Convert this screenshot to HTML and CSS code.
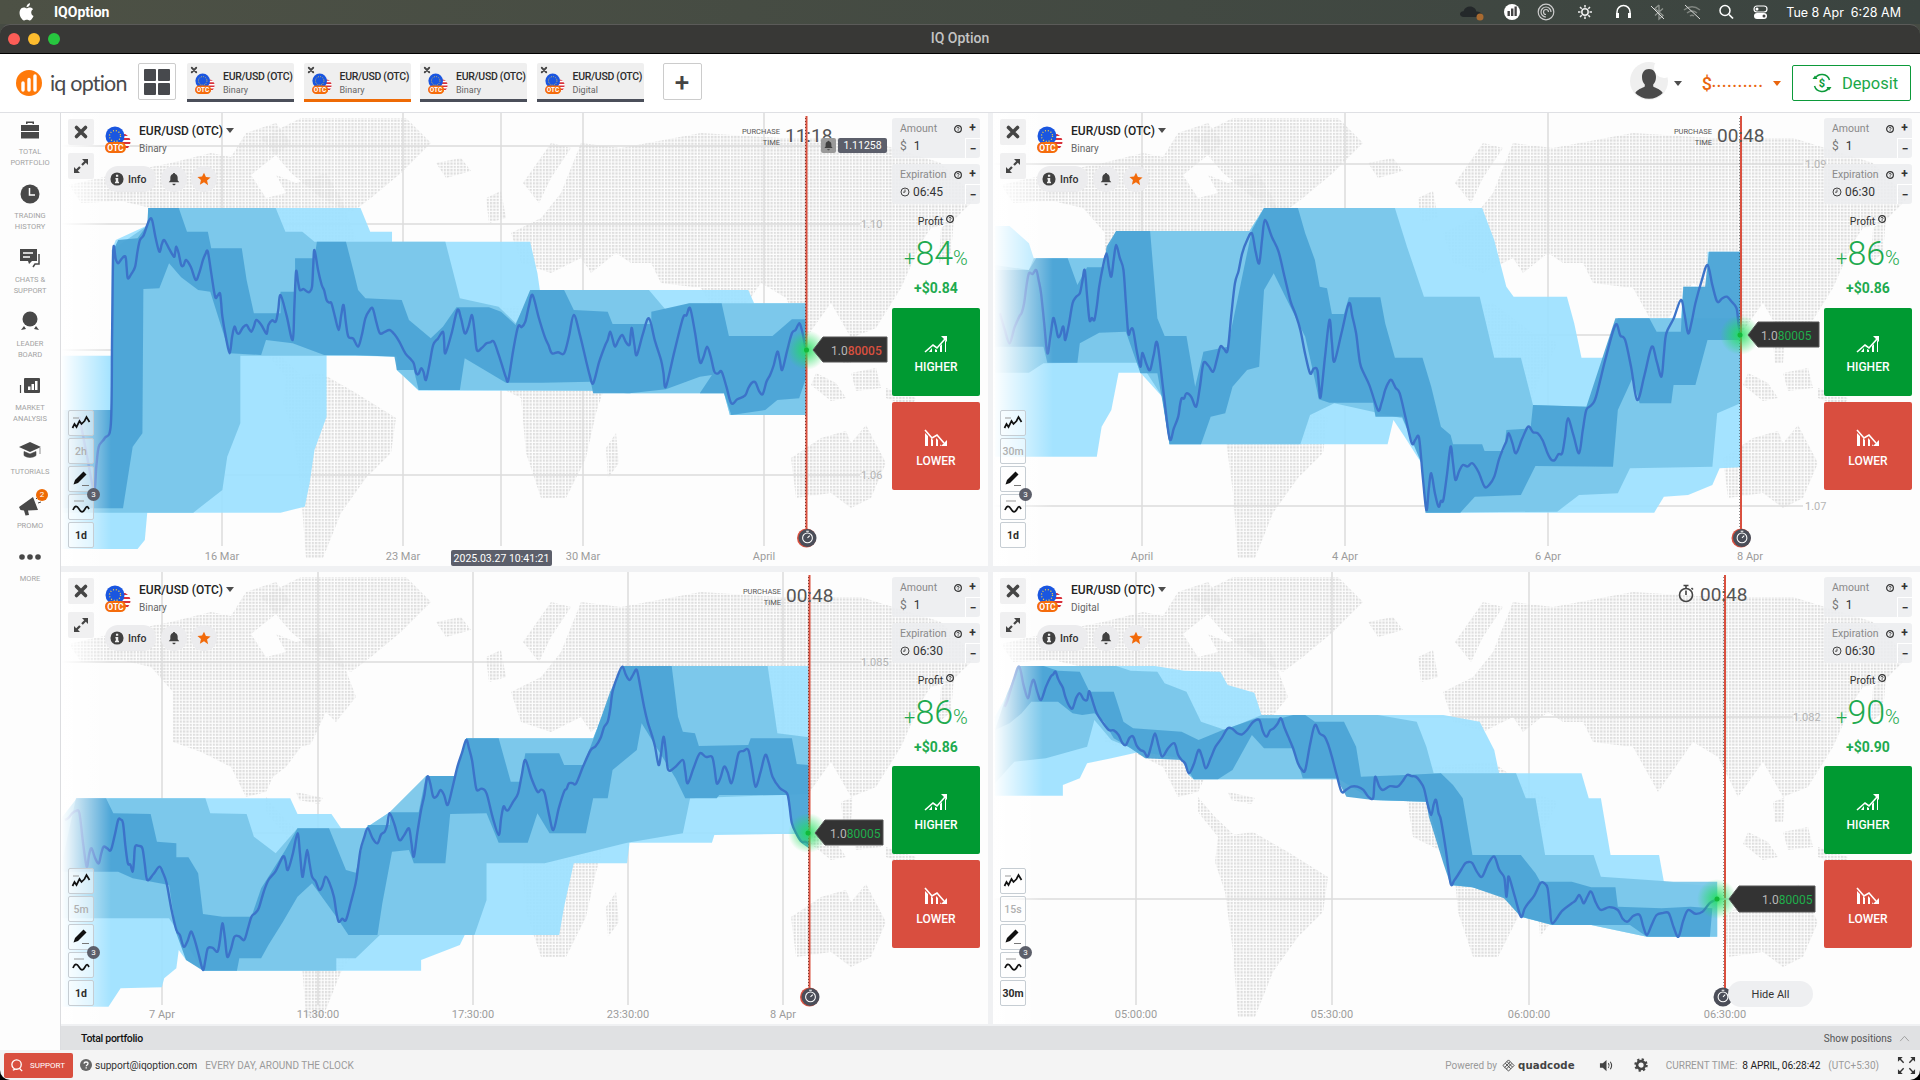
FILE: index.html
```html
<!DOCTYPE html>
<html lang="en">

<head>
    <meta charset="UTF-8">
    <meta name="viewport" content="width=device-width, initial-scale=1.0">
    <title>IQ Option</title>
    <link rel="stylesheet" href="styles.css">
</head>

<body>
    <!-- shared icons, map and gradients -->
    <svg class="sprite" width="0" height="0">
        <defs>
            <pattern id="dots" width="3.3" height="3.3" patternUnits="userSpaceOnUse">
                <rect width="2.2" height="2.2" fill="#dedede"/>
            </pattern>
            <linearGradient id="fade">
                <stop offset="0" stop-color="#fff"/>
                <stop offset="1" stop-color="#fff" stop-opacity="0"/>
            </linearGradient>
            <radialGradient id="glow">
                <stop offset="0" stop-color="#1fe05a" stop-opacity=".9"/>
                <stop offset="1" stop-color="#1fe05a" stop-opacity="0"/>
            </radialGradient>
            <clipPath id="eu"><circle cx="10" cy="10" r="9.5"/></clipPath>
            <clipPath id="us"><circle cx="17" cy="16" r="8.5"/></clipPath>
        </defs>
        <symbol id="map" viewBox="0 0 927 453">
            <g fill="url(#dots)">
                <polygon points="8,72 60,60 110,50 150,40 170,44 185,20 215,10 230,30 205,50 190,62 205,85 225,80 215,62 235,70 265,60 280,85 295,125 275,150 265,140 250,172 240,175 225,195 212,205 205,220 185,225 170,195 140,180 112,170 112,120 90,95 60,88 20,90"/>
                <polygon points="200,25 240,5 345,5 370,30 340,60 310,85 290,100 260,85 230,60"/>
                <polygon points="225,265 260,260 295,280 335,305 330,340 305,365 280,400 262,445 245,445 240,380 232,320 222,290"/>
                <polygon points="205,225 222,245 240,262 225,265 205,240"/>
                <polygon points="235,220 262,226 258,232 238,228"/>
                <polygon points="375,50 400,45 410,58 385,65"/>
                <polygon points="425,85 440,78 445,105 428,110"/>
                <polygon points="462,70 490,30 510,35 490,65 478,90"/>
                <polygon points="500,80 520,30 560,35 640,20 720,25 800,25 880,50 915,85 890,110 870,115 860,130 840,175 815,215 790,225 770,190 745,225 725,185 700,170 665,220 640,175 600,170 590,150 570,150 555,140 530,160 520,145 490,160 460,150 450,120 480,105"/>
                <polygon points="880,115 893,105 890,140 878,150"/>
                <polygon points="412,215 430,195 470,192 500,190 540,220 565,230 545,270 535,300 525,345 505,385 480,385 465,340 460,285 420,265"/>
                <polygon points="545,335 555,320 558,350 547,365"/>
                <polygon points="730,345 760,325 785,318 790,330 805,312 825,350 810,385 790,395 770,380 735,385"/>
                <polygon points="755,260 775,270 785,285 770,288 750,272"/>
                <polygon points="790,260 815,255 820,275 795,278"/>
                <polygon points="825,275 855,285 850,295 825,285"/>
                <polygon points="780,230 792,225 790,250 782,250"/>
            </g>
        </symbol>
        <symbol id="flag" viewBox="0 0 26 27">
            <g clip-path="url(#us)">
                <rect x="8" y="7" width="18" height="18" fill="#fff"/>
                <path d="M8 9h18M8 13h18M8 17h18M8 21h18M8 25h18" stroke="#d8323c" stroke-width="2"/>
                <rect x="8" y="7" width="9" height="8" fill="#8fb6e8"/>
            </g>
            <circle cx="10" cy="10" r="9.5" fill="#1a56e0"/>
            <circle cx="10" cy="10" r="5.5" fill="none" stroke="#ffd43a" stroke-width="1.3" stroke-dasharray="1 1.9"/>
            <rect y="16" width="21" height="11" rx="5.5" fill="#f56c0c"/>
        </symbol>
        <symbol id="ico-close" viewBox="0 0 16 16">
            <path d="M3.5 3.5l9 9M12.5 3.5l-9 9" stroke="#454545" stroke-width="3.6" stroke-linecap="round"/>
        </symbol>
        <symbol id="ico-expand" viewBox="0 0 16 16">
            <path d="M9 1h6v6l-2.2-2.2-3 3-1.600-1.600 3-3zM7 15H1V9l2.200 2.200 3-3 1.600 1.600-3 3z" fill="#454545"/>
        </symbol>
        <symbol id="ico-line" viewBox="0 0 20 20">
            <path d="M2 5h6" stroke="#999" stroke-width="1"/>
            <path d="M1.500 15l2-4 2 3 3-6 2 3 3-3 2-4 3 5" fill="none" stroke="#111" stroke-width="1.700"/>
        </symbol>
        <symbol id="ico-pen" viewBox="0 0 20 20">
            <path d="M12.500 2.500l3 3-8.500 8.500-4.500 1.500 1.500-4.500z" fill="#111"/>
            <path d="M11 16.500h7" stroke="#777" stroke-width="1"/>
        </symbol>
        <symbol id="ico-wave" viewBox="0 0 20 20">
            <path d="M3 4h10" stroke="#999" stroke-width="1"/>
            <path d="M2 13c2-5 4-4.500 6-1s4 4 6 0 3-2 4 0" fill="none" stroke="#111" stroke-width="1.700"/>
        </symbol>
        <symbol id="ico-info" viewBox="0 0 16 16">
            <circle cx="8" cy="8" r="7.500" fill="#404040"/>
            <path d="M6.800 3.200h2.600v2.200H6.800zM6.200 6.800h3.200v4.200h.9v1.800H5.700V11h1V8.600h-.5z" fill="#eee"/>
        </symbol>
        <symbol id="ico-bell" viewBox="0 0 16 16">
            <path d="M8 1c.8 0 1.300.5 1.300 1.200 2 .6 2.900 2.300 2.900 4.300v3l1.800 2.300H2l1.800-2.300v-3c0-2 .9-3.700 2.900-4.300C6.700 1.500 7.200 1 8 1zM6.200 13.300h3.600C9.800 14.400 9 15 8 15s-1.800-.6-1.800-1.700z" fill="#404040"/>
        </symbol>
        <symbol id="ico-star" viewBox="0 0 16 16">
            <path d="M8 .8l2.200 4.900 5.300.5-4 3.500 1.200 5.300L8 11.800l-4.700 2.700 1.200-5.300-4-3.500 5.300-.5z" fill="#f26a0a"/>
        </symbol>
        <symbol id="ico-help" viewBox="0 0 10 10">
            <circle cx="5" cy="5" r="4.200" fill="none" stroke="#333" stroke-width="1.500"/>
            <path d="M3.600 4.100C3.700 3.300 4.300 3 5 3c.8 0 1.400.4 1.400 1.100 0 1-1.300 1-1.300 1.800M5.100 6.500v.9" fill="none" stroke="#333" stroke-width="1.100"/>
        </symbol>
        <symbol id="ico-clock" viewBox="0 0 12 12">
            <circle cx="6" cy="6" r="4.800" fill="none" stroke="#333" stroke-width="1.100"/>
            <path d="M6 3v3.200H3.600" fill="none" stroke="#333" stroke-width="1"/>
        </symbol>
        <symbol id="ico-up" viewBox="0 0 24 18">
            <path d="M1 17l8-7 4 3 8-9" fill="none" stroke="#fff" stroke-width="1.600"/>
            <path d="M17 1h6v6z" fill="#fff"/>
            <path d="M1 17h4l3-4v4h3v-3l2 1v2h3V11l2-2v8h3V6l1-1v12z" fill="#fff"/>
        </symbol>
        <symbol id="ico-down" viewBox="0 0 24 18">
            <path d="M1 1l7 8 5-3 7 8" fill="none" stroke="#fff" stroke-width="1.600"/>
            <path d="M23 17h-6l6-6z" fill="#fff"/>
            <path d="M1 17V4l3 3v10h3V9l2 2v6h3V9l2 2v6h2v-2l1 2z" fill="#fff"/>
        </symbol>
        <symbol id="ico-timer" viewBox="0 0 18 18">
            <circle cx="9" cy="10" r="5.500" fill="none" stroke="#fff" stroke-width="1.200"/>
            <path d="M9 10l2.500-2.500M7.500 2.500h3" stroke="#fff" stroke-width="1.200"/>
        </symbol>
    </svg>

    <div class="menubar">
        <svg class="apple" viewBox="0 0 24 24"><path fill="#fff" d="M17.050 12.540c-.03-2.600 2.120-3.850 2.220-3.910-1.210-1.770-3.090-2.010-3.760-2.040-1.600-.16-3.120.94-3.930.94-.81 0-2.060-.92-3.390-.89-1.740.03-3.350 1.010-4.250 2.570-1.810 3.140-.46 7.800 1.300 10.350.86 1.250 1.890 2.650 3.240 2.600 1.300-.05 1.790-.84 3.360-.84 1.570 0 2.010.84 3.390.81 1.400-.02 2.280-1.270 3.140-2.520.99-1.450 1.400-2.850 1.420-2.920-.03-.01-2.720-1.040-2.740-4.150zM14.460 4.900c.72-.87 1.200-2.080 1.070-3.280-1.030.04-2.280.69-3.020 1.550-.66.77-1.240 2-1.080 3.180 1.150.09 2.320-.58 3.030-1.450z"/></svg>
        <span class="menu-app">IQOption</span>
        <svg class="menu-icons" viewBox="0 0 320 24">
            <path d="M5 17c-3 0-4-1.500-4-3s1.500-3 3.500-2.800C5.500 8 8 6.500 11 6.500c3.500 0 6 2.400 6.300 5 2.700 0 5.700 1.500 5.700 3s-1.500 2.500-4 2.500z" fill="#24282a"/>
            <circle cx="21" cy="17" r="3.500" fill="#a86a30"/>
            <circle cx="53" cy="12" r="8" fill="#fff"/>
            <path d="M48.500 11h2.400v5h-2.400zM52 8.500h2.400V16H52zM55.500 6.500h2.300V16h-2.300z" fill="#444"/>
            <circle cx="87" cy="12" r="7.800" fill="none" stroke="#ccc" stroke-width="1.200"/>
            <path d="M92 12a5 5 0 1 0-5 5M89.500 12a2.500 2.500 0 1 0-2.500 2.500" fill="none" stroke="#ccc" stroke-width="1.200"/>
            <circle cx="126" cy="12" r="3.200" fill="none" stroke="#eee" stroke-width="1.500"/>
            <path d="M126 5v2.500M126 16.500V19M119 12h2.500M130.500 12h2.500M121 7l1.700 1.700M129.300 15.300L131 17M121 17l1.700-1.700M129.300 8.700L131 7" stroke="#eee" stroke-width="1.500"/>
            <path d="M158 17v-5a6.500 6.500 0 0 1 13 0v5" fill="none" stroke="#fff" stroke-width="1.500"/>
            <path d="M157 13h3v5h-3zM169 13h3v5h-3z" fill="#fff"/>
            <path d="M200 5l-4 3.500 8 7-4 3.500V5M196 15.500l8-7" fill="none" stroke="#8f948f" stroke-width="1.300"/>
            <path d="M192 6l13 13" stroke="#ddd" stroke-width="1"/>
            <path d="M225 10c5-4 11-4 16 0M228 13c3-2.500 7-2.500 10 0M231 16c1.500-1 2.500-1 4 0" fill="none" stroke="#7f847f" stroke-width="1.500"/>
            <path d="M226 5l15 14" stroke="#ddd" stroke-width="1"/>
            <circle cx="266" cy="10.500" r="5" fill="none" stroke="#fff" stroke-width="1.500"/>
            <path d="M270 14.500l4 4" stroke="#fff" stroke-width="1.700"/>
            <rect x="295" y="6" width="13" height="6" rx="3" fill="none" stroke="#fff" stroke-width="1.200"/>
            <circle cx="298" cy="9" r="1.500" fill="#fff"/>
            <rect x="295" y="13" width="13" height="6" rx="3" fill="#fff"/>
            <circle cx="305" cy="16" r="1.500" fill="#444"/>
        </svg>
        <span class="menu-clock">Tue 8 Apr</span>
        <span class="menu-clock">6:28 AM</span>
    </div>

    <div class="titlebar">
        <div class="lights"><i class="red"></i><i class="yellow"></i><i class="green"></i></div>
        <span>IQ Option</span>
    </div>

    <header class="appbar">
        <svg class="logo-mark" viewBox="0 0 26 26">
            <circle cx="13" cy="13" r="13" fill="#ff7a0a"/>
            <path d="M7 13v7M13 9.500V20M19 6v14" stroke="#fff" stroke-width="3.400" stroke-linecap="round"/>
        </svg>
        <span class="logo-text">iq option</span>
        <button class="layout-btn"><i></i><i></i><i></i><i></i></button>
        <div class="tabs">
            <div class="tab"><svg class="tab-x" viewBox="0 0 16 16"><use href="#ico-close"/></svg><svg class="tab-flag" viewBox="0 0 26 27"><use href="#flag" width="26" height="27"/><text x="10.500" y="24.600" class="flag-text">OTC</text></svg><div><b>EUR/USD (OTC)</b><span>Binary</span></div></div>
            <div class="tab active"><svg class="tab-x" viewBox="0 0 16 16"><use href="#ico-close"/></svg><svg class="tab-flag" viewBox="0 0 26 27"><use href="#flag" width="26" height="27"/><text x="10.500" y="24.600" class="flag-text">OTC</text></svg><div><b>EUR/USD (OTC)</b><span>Binary</span></div></div>
            <div class="tab"><svg class="tab-x" viewBox="0 0 16 16"><use href="#ico-close"/></svg><svg class="tab-flag" viewBox="0 0 26 27"><use href="#flag" width="26" height="27"/><text x="10.500" y="24.600" class="flag-text">OTC</text></svg><div><b>EUR/USD (OTC)</b><span>Binary</span></div></div>
            <div class="tab"><svg class="tab-x" viewBox="0 0 16 16"><use href="#ico-close"/></svg><svg class="tab-flag" viewBox="0 0 26 27"><use href="#flag" width="26" height="27"/><text x="10.500" y="24.600" class="flag-text">OTC</text></svg><div><b>EUR/USD (OTC)</b><span>Digital</span></div></div>
        </div>
        <button class="plus-btn">+</button>
        <div class="account">
            <svg class="avatar" viewBox="0 0 38 38">
                <circle cx="19" cy="19" r="19" fill="#efefef"/>
                <circle cx="34" cy="6" r="10" fill="#fff"/>
                <path d="M19 7c4.500 0 7 3.500 7 8 0 3-1 5.500-2.800 7.500v2c3 1.800 7.800 3 9.500 6.500a19 19 0 0 1-27.400 0c1.700-3.500 6.500-4.700 9.500-6.500v-2C13 20.500 12 18 12 15c0-4.500 2.500-8 7-8z" fill="#4a4a4a"/>
            </svg>
            <i class="caret"></i>
            <span class="balance"><b>$</b>••••••••••</span>
            <i class="caret orange"></i>
            <button class="deposit">
                <svg viewBox="0 0 22 22"><path d="M18.500 8A8 8 0 0 0 4 6.500M3.500 14A8 8 0 0 0 18 15.500" fill="none" stroke="#0c9a3a" stroke-width="1.500"/><path d="M1.500 7h5L4 3.500zM20.500 15h-5l2.500 3.500z" fill="#0c9a3a"/><text x="11" y="15" class="deposit-sign">$</text></svg>
                Deposit
            </button>
        </div>
    </header>

    <div class="workspace">
        <nav class="sidebar">
            <a class="side-item">
                <svg viewBox="0 0 24 24"><path d="M8 6V3.500h8V6h-1.500V5h-5v1zM3 7h18v6H3zM3 14h18v6.500H3z" fill="#484848"/></svg>
                <span>TOTAL<br>PORTFOLIO</span>
            </a>
            <a class="side-item">
                <svg viewBox="0 0 24 24"><circle cx="12" cy="12" r="9.500" fill="#484848"/><path d="M11.500 6v7h5.500" fill="none" stroke="#fff" stroke-width="1.500"/></svg>
                <span>TRADING<br>HISTORY</span>
            </a>
            <a class="side-item">
                <svg viewBox="0 0 24 24"><path d="M2 3h17v12h-5l-3 3-1-3H2z" fill="#484848"/><path d="M5 7h10M5 11h7" stroke="#fff" stroke-width="1.500"/><path d="M21 8v10h-4l-2 3" fill="none" stroke="#484848" stroke-width="1.500"/></svg>
                <span>CHATS &amp;<br>SUPPORT</span>
            </a>
            <a class="side-item">
                <svg viewBox="0 0 24 24"><circle cx="12" cy="9" r="7.500" fill="#484848"/><path d="M3 20l3-4 2 3zM21 20l-3-4-2 3z" fill="#484848"/></svg>
                <span>LEADER<br>BOARD</span>
            </a>
            <a class="side-item">
                <svg viewBox="0 0 24 24"><rect x="6" y="4" width="16" height="15" rx="1" fill="#484848"/><path d="M2.500 11v8" stroke="#484848" stroke-width="1.200"/><path d="M10 12.500h2.500V16H10zM13.500 10H16v6h-2.500zM17 7h2.500v9H17z" fill="#fff"/></svg>
                <span>MARKET<br>ANALYSIS</span>
            </a>
            <a class="side-item">
                <svg viewBox="0 0 24 24"><path d="M12 4l11 5-11 5L1 9z" fill="#484848"/><path d="M6 13.500v4c3 2.500 9 2.500 12 0v-4l-6 2.500zM22 10v6" fill="#484848" stroke="#484848" stroke-width=".6"/></svg>
                <span>TUTORIALS</span>
            </a>
            <a class="side-item">
                <svg viewBox="0 0 24 24"><path d="M1 15l14-10 5 13-10 .5 1 4.500-3.500.500-1.500-5-3.500-.5z" fill="#484848"/><path d="M18 7l2-2M20 11l3-1" stroke="#484848" stroke-width="1"/></svg>
                <em>2</em>
                <span>PROMO</span>
            </a>
            <a class="side-item">
                <svg viewBox="0 0 24 24"><circle cx="4" cy="12" r="2.800" fill="#484848"/><circle cx="12" cy="12" r="2.800" fill="#484848"/><circle cx="20" cy="12" r="2.800" fill="#484848"/></svg>
                <span>MORE</span>
            </a>
        </nav>

        <div class="content">
            <div class="panels">

                <section class="panel">
                    <svg class="plot" viewBox="0 0 927 453">
                        <use href="#map" width="927" height="453"/>
                        <path class="grid" d="M0 33H760M0 111H799M0 237H745M0 362H799M161 0V433M342 0V433M440 0V433M522 0V433M703 0V433"/>
                        <g transform="translate(-1 77) scale(.4847 .3333)">
                            <polygon class="band-light" points="0,497 107,497 107,180 115,150 182,105 182,54 620,54 640,125 685,125 685,155 970,155 985,250 990,300 1420,300 1432,340 1540,340 1540,675 1382,675 1370,610 1100,610 1100,602 740,602 695,540 695,500 550,495 550,680 525,780 515,880 505,950 455,968 180,968 175,1050 160,1077 0,1077"/>
                            <polygon class="band-mid" points="0,660 107,660 107,180 182,105 182,54 445,54 465,125 500,125 525,155 795,155 810,240 825,325 905,350 940,400 975,300 1215,300 1250,360 1300,340 1540,340 1540,675 1382,675 1370,610 1170,610 1100,602 740,600 695,540 695,497 372,497 372,700 345,800 335,900 275,968 0,968"/>
                            <polygon class="band-dark" points="0,660 105,660 110,180 120,150 160,145 180,105 182,54 245,54 262,125 305,125 312,175 375,175 385,270 400,370 455,370 455,305 485,305 485,205 525,205 530,155 590,155 605,240 615,300 630,325 705,330 720,390 765,445 790,410 818,352 885,352 910,365 940,405 970,300 1040,300 1060,360 1130,365 1140,402 1220,402 1220,365 1298,340 1365,340 1380,438 1470,438 1510,388 1540,388 1540,560 1525,625 1480,630 1455,660 1385,675 1370,610 1320,610 1345,555 1320,560 1250,598 1175,610 1100,610 1095,575 995,578 920,578 835,505 825,600 740,600 730,540 695,540 690,500 610,495 545,495 480,460 425,450 415,495 350,490 310,305 285,300 250,262 225,220 205,295 172,297 170,730 150,770 130,955 0,955"/>
                            <polyline class="price" points="40,680 70,900 80,770 105,700 110,180 120,220 135,200 140,265 155,230 165,150 180,105 190,90 205,185 215,150 235,200 240,170 250,225 260,210 280,270 295,210 305,185 320,320 330,310 335,380 350,490 360,410 370,430 385,405 395,425 405,390 425,430 430,405 445,395 455,315 480,450 487,245 495,300 510,305 520,290 525,180 540,285 550,330 560,340 575,420 585,345 595,440 615,470 630,385 645,355 660,430 680,420 700,455 725,510 735,550 745,535 755,570 770,465 790,425 795,490 820,360 835,430 850,375 860,480 880,460 895,455 915,540 925,570 945,410 960,395 975,315 1000,440 1015,490 1040,490 1060,375 1085,510 1100,580 1125,465 1135,425 1145,470 1160,435 1175,465 1180,415 1190,495 1215,385 1240,510 1250,590 1285,385 1300,355 1320,515 1335,470 1350,545 1365,545 1385,640 1410,620 1420,595 1435,578 1450,612 1465,555 1480,485 1490,540 1510,430 1525,400 1535,450 1540,480"/>
                        </g>
                        <rect width="50" height="453" fill="url(#fade)"/>
                        <path class="expiry-ticks" d="M744.500 5V425"/>
                        <path class="expiry" d="M745.500 3V430"/>
                        <circle cx="745.500" cy="237" r="20" fill="url(#glow)"/>
                        <circle cx="745.500" cy="237" r="2.500" fill="#12b93a"/>
                        <circle cx="745.500" cy="425" r="9.500" fill="#d9503f"/>
                        <circle cx="746.500" cy="425" r="9" fill="#4b4e59"/>
                        <use href="#ico-timer" x="738.500" y="416" width="16" height="16"/>
                        <polygon class="tag" points="752,237 762,224 826,224 826,249 762,249"/>
                        <text class="tag-price" x="770" y="241.500">1.0<tspan class="fall">80005</tspan></text>
                        <text class="purchase" x="719" y="21">PURCHASE</text>
                        <text class="purchase" x="719" y="32">TIME</text>
                        <text class="timer" x="724" y="29">11:18</text>
                        <rect class="bell-box" x="760" y="25" width="15" height="15" rx="2"/>
                        <use href="#ico-bell" x="762" y="27" width="11" height="11"/>
                        <rect class="price-box" x="777" y="25" width="49" height="15" rx="2"/>
                        <text class="price-text" x="801.500" y="36">1.11258</text>
                        <text class="axis-y" x="800" y="115">1.10</text>
                        <text class="axis-y" x="800" y="366">1.06</text>
                        <text class="axis-x" x="161" y="447">16 Mar</text>
                        <text class="axis-x" x="342" y="447">23 Mar</text>
                        <text class="axis-x" x="522" y="447">30 Mar</text>
                        <text class="axis-x" x="703" y="447">April</text>
                        <rect class="date-box" x="390" y="437" width="101" height="16" rx="2"/>
                        <text class="date-text" x="440.500" y="449">2025.03.27 10:41:21</text>
                    </svg>
                    <div class="panel-side">
                        <button class="square"><svg><use href="#ico-close"/></svg></button>
                        <button class="square"><svg><use href="#ico-expand"/></svg></button>
                        <div class="tools">
                            <button class="tool"><svg><use href="#ico-line"/></svg></button>
                            <button class="tool dim">2h</button>
                            <button class="tool"><svg><use href="#ico-pen"/></svg></button>
                            <button class="tool"><svg><use href="#ico-wave"/></svg><em>3</em></button>
                            <button class="tool">1d</button>
                        </div>
                    </div>
                    <div class="head">
                        <div class="asset">
                            <svg class="asset-flag" viewBox="0 0 26 27"><use href="#flag" width="26" height="27"/><text x="10.500" y="24.600" class="flag-text">OTC</text></svg>
                            <div>
                                <div class="asset-name">EUR/USD (OTC)<i class="caret small"></i></div>
                                <div class="asset-type">Binary</div>
                            </div>
                        </div>
                        <div class="pills">
                            <span class="pill"><svg><use href="#ico-info"/></svg>Info</span>
                            <span class="pill round"><svg><use href="#ico-bell"/></svg></span>
                            <span class="pill round"><svg><use href="#ico-star"/></svg></span>
                        </div>
                    </div>
                    <div class="trade">
                        <div class="stepper">
                            <div class="stepper-main">
                                <div class="stepper-label">Amount<svg><use href="#ico-help"/></svg></div>
                                <div class="stepper-value"><span>$</span>1</div>
                            </div>
                            <div class="stepper-btns"><b>+</b><b>−</b></div>
                        </div>
                        <div class="stepper">
                            <div class="stepper-main">
                                <div class="stepper-label">Expiration<svg><use href="#ico-help"/></svg></div>
                                <div class="stepper-value"><svg><use href="#ico-clock"/></svg>06:45</div>
                            </div>
                            <div class="stepper-btns"><b>+</b><b>−</b></div>
                        </div>
                        <div class="profit-label">Profit<svg><use href="#ico-help"/></svg></div>
                        <div class="profit-pct"><small>+</small>84<small>%</small></div>
                        <div class="profit-sum">+$0.84</div>
                        <button class="deal higher"><svg><use href="#ico-up"/></svg>HIGHER</button>
                        <button class="deal lower"><svg><use href="#ico-down"/></svg>LOWER</button>
                    </div>
                </section>

                <section class="panel">
                    <svg class="plot" viewBox="0 0 927 453">
                        <use href="#map" width="927" height="453"/>
                        <path class="grid" d="M0 51H810M0 222H748M0 393H810M149 0V433M352 0V433M555 0V433"/>
                        <g transform="translate(2 77) scale(.4847 .3333)">
                            <polygon class="band-light" points="0,108 30,108 70,160 80,205 225,205 250,123 525,123 555,54 1005,54 1030,150 1055,290 1070,320 1180,320 1195,400 1210,503 1270,503 1285,385 1415,385 1420,290 1470,290 1470,185 1538,185 1538,832 1495,835 1480,885 1430,915 1380,920 1360,968 890,968 880,820 845,740 822,690 810,763 360,763 345,620 300,548 255,548 240,660 220,710 210,800 0,800"/>
                            <polygon class="band-mid" points="0,225 70,240 80,205 225,205 250,123 525,123 555,54 825,54 850,170 885,320 1000,320 1030,503 1085,503 1110,645 1225,650 1285,385 1538,385 1538,640 1490,670 1480,830 1310,835 1285,910 1205,915 1160,965 890,968 880,820 840,685 700,640 650,675 630,763 360,763 345,620 300,518 175,518 100,520 70,548 0,548"/>
                            <polygon class="band-dark" points="0,240 70,240 85,205 150,205 170,285 190,232 225,232 230,170 250,123 320,123 335,385 350,438 395,438 413,590 430,485 480,470 530,120 555,54 625,54 640,130 660,210 670,290 685,295 695,372 720,372 730,322 795,322 805,400 825,503 882,503 900,590 920,710 940,735 945,763 1005,763 1010,783 1050,783 1055,720 1105,715 1110,645 1220,650 1280,385 1350,385 1365,425 1415,425 1420,290 1465,290 1473,185 1538,185 1538,450 1470,450 1445,585 1400,585 1395,640 1330,640 1315,565 1285,660 1275,830 1115,828 1085,915 990,920 960,968 888,968 880,820 840,680 785,680 780,638 690,638 668,628 660,570 640,440 575,250 555,300 545,530 520,540 490,590 475,670 445,680 425,763 360,763 345,630 335,550 300,550 270,425 215,428 175,460 170,518 108,518 100,470 0,470"/>
                            <polyline class="price" points="10,370 30,460 50,380 60,340 70,250 85,240 95,310 108,490 120,385 130,440 140,410 145,450 160,340 175,310 185,240 195,390 205,390 215,290 230,190 240,260 250,165 265,240 275,430 285,420 300,530 305,490 320,540 335,460 360,745 378,680 385,625 395,610 415,650 430,520 450,545 465,470 480,480 495,280 510,190 530,130 545,220 557,90 585,185 610,335 630,420 650,550 665,540 672,620 690,390 700,515 730,340 745,430 755,530 790,660 805,600 818,570 835,610 860,760 875,745 890,960 900,850 915,950 925,930 940,770 950,870 965,825 985,820 1010,890 1030,860 1050,770 1060,730 1075,790 1100,710 1120,730 1140,790 1155,810 1170,790 1182,685 1205,790 1220,660 1240,620 1280,405 1300,450 1325,630 1355,470 1375,560 1385,430 1415,330 1430,430 1445,340 1470,225 1490,335 1510,320 1530,355 1538,440"/>
                        </g>
                        <rect width="60" height="453" fill="url(#fade)"/>
                        <path class="expiry-ticks" d="M747 5V425"/>
                        <path class="expiry" d="M748 3V430"/>
                        <circle cx="747" cy="222" r="20" fill="url(#glow)"/>
                        <circle cx="747" cy="222" r="2.500" fill="#12b93a"/>
                        <circle cx="748" cy="425" r="9.500" fill="#d9503f"/>
                        <circle cx="749" cy="425" r="9" fill="#4b4e59"/>
                        <use href="#ico-timer" x="741" y="416" width="16" height="16"/>
                        <polygon class="tag" points="755,222 765,209 826,209 826,234 765,234"/>
                        <text class="tag-price" x="768" y="226.500">1.0<tspan class="rise">80005</tspan></text>
                        <text class="purchase" x="719" y="21">PURCHASE</text>
                        <text class="purchase" x="719" y="32">TIME</text>
                        <text class="timer" x="724" y="29">00:48</text>
                        <text class="axis-y" x="812" y="55">1.09</text>
                        <text class="axis-y" x="812" y="397">1.07</text>
                        <text class="axis-x" x="149" y="447">April</text>
                        <text class="axis-x" x="352" y="447">4 Apr</text>
                        <text class="axis-x" x="555" y="447">6 Apr</text>
                        <text class="axis-x" x="757" y="447">8 Apr</text>
                    </svg>
                    <div class="panel-side">
                        <button class="square"><svg><use href="#ico-close"/></svg></button>
                        <button class="square"><svg><use href="#ico-expand"/></svg></button>
                        <div class="tools">
                            <button class="tool"><svg><use href="#ico-line"/></svg></button>
                            <button class="tool dim">30m</button>
                            <button class="tool"><svg><use href="#ico-pen"/></svg></button>
                            <button class="tool"><svg><use href="#ico-wave"/></svg><em>3</em></button>
                            <button class="tool">1d</button>
                        </div>
                    </div>
                    <div class="head">
                        <div class="asset">
                            <svg class="asset-flag" viewBox="0 0 26 27"><use href="#flag" width="26" height="27"/><text x="10.500" y="24.600" class="flag-text">OTC</text></svg>
                            <div>
                                <div class="asset-name">EUR/USD (OTC)<i class="caret small"></i></div>
                                <div class="asset-type">Binary</div>
                            </div>
                        </div>
                        <div class="pills">
                            <span class="pill"><svg><use href="#ico-info"/></svg>Info</span>
                            <span class="pill round"><svg><use href="#ico-bell"/></svg></span>
                            <span class="pill round"><svg><use href="#ico-star"/></svg></span>
                        </div>
                    </div>
                    <div class="trade">
                        <div class="stepper">
                            <div class="stepper-main">
                                <div class="stepper-label">Amount<svg><use href="#ico-help"/></svg></div>
                                <div class="stepper-value"><span>$</span>1</div>
                            </div>
                            <div class="stepper-btns"><b>+</b><b>−</b></div>
                        </div>
                        <div class="stepper">
                            <div class="stepper-main">
                                <div class="stepper-label">Expiration<svg><use href="#ico-help"/></svg></div>
                                <div class="stepper-value"><svg><use href="#ico-clock"/></svg>06:30</div>
                            </div>
                            <div class="stepper-btns"><b>+</b><b>−</b></div>
                        </div>
                        <div class="profit-label">Profit<svg><use href="#ico-help"/></svg></div>
                        <div class="profit-pct"><small>+</small>86<small>%</small></div>
                        <div class="profit-sum">+$0.86</div>
                        <button class="deal higher"><svg><use href="#ico-up"/></svg>HIGHER</button>
                        <button class="deal lower"><svg><use href="#ico-down"/></svg>LOWER</button>
                    </div>
                </section>

                <section class="panel">
                    <svg class="plot" viewBox="0 0 927 453">
                        <use href="#map" width="927" height="453"/>
                        <path class="grid" d="M0 90H800M0 261H748M101 0V433M257 0V433M412 0V433M567 0V433M722 0V433"/>
                        <g transform="translate(-1 78) scale(.4847 .3333)">
                            <polygon class="band-light" points="0,510 35,445 475,445 490,492 560,492 580,535 630,535 680,487 745,487 755,378 815,378 838,265 1100,265 1160,48 1545,48 1545,552 1480,552 1350,555 1345,578 1175,578 1170,640 1060,640 1040,770 1030,855 835,855 825,885 745,930 745,962 300,962 260,930 245,900 240,955 215,985 210,1012 125,1015 100,1070 0,1070"/>
                            <polygon class="band-mid" points="0,510 35,445 300,445 310,490 385,492 400,560 445,610 490,535 630,535 680,487 755,378 815,378 838,265 1100,265 1160,48 1460,48 1480,250 1545,262 1545,432 1300,445 1285,550 1170,578 1000,640 880,640 880,750 855,855 660,855 610,925 570,925 570,962 295,962 255,870 225,805 0,805"/>
                            <polygon class="band-dark" points="33,445 95,445 110,490 187,492 200,575 240,580 240,622 265,622 285,670 295,792 335,800 395,800 415,715 465,600 490,535 555,535 590,660 610,668 635,525 680,525 682,487 740,487 755,378 815,378 838,265 905,265 930,395 950,395 960,310 1030,310 1040,345 1080,345 1105,250 1135,125 1160,48 1262,48 1275,200 1285,245 1310,250 1318,288 1420,285 1425,265 1510,265 1520,342 1545,345 1545,595 1530,580 1510,520 1500,435 1360,435 1355,445 1290,445 1270,385 1200,220 1190,300 1140,360 1130,445 1100,445 1085,550 1010,550 985,490 965,578 905,578 880,490 805,492 795,640 730,640 720,600 685,605 665,760 655,855 595,855 570,800 520,700 490,740 460,815 430,885 415,925 370,925 365,962 295,962 260,930 240,850 225,705 150,685 120,665 0,665"/>
                            <polyline class="price" points="10,510 25,490 40,490 55,650 65,595 80,640 90,590 105,600 120,510 130,520 140,640 150,665 155,590 170,595 180,690 205,650 220,700 240,840 255,890 270,845 280,880 295,960 305,895 325,905 335,820 345,920 360,860 380,870 395,800 410,775 430,690 460,620 470,660 490,550 500,680 510,600 520,680 535,720 548,680 565,740 575,815 590,810 610,700 620,600 635,535 655,580 670,545 680,490 700,570 720,535 730,620 745,480 758,380 770,440 785,420 800,465 820,350 838,270 850,330 860,420 880,430 905,555 915,470 925,480 945,430 960,330 985,425 1000,430 1018,540 1040,425 1050,400 1065,400 1095,300 1115,265 1130,215 1140,125 1160,50 1175,90 1190,60 1205,170 1220,250 1235,345 1245,260 1255,360 1285,330 1295,400 1320,310 1345,320 1355,400 1370,350 1385,400 1400,310 1420,300 1435,410 1455,315 1470,380 1500,430 1510,520 1530,575 1545,580"/>
                        </g>
                        <rect width="50" height="453" fill="url(#fade)"/>
                        <path class="expiry-ticks" d="M747.500 5V425"/>
                        <path class="expiry" d="M748.500 3V430"/>
                        <circle cx="747" cy="261" r="20" fill="url(#glow)"/>
                        <circle cx="747" cy="261" r="2.500" fill="#12b93a"/>
                        <circle cx="748.500" cy="425" r="9.500" fill="#d9503f"/>
                        <circle cx="749.500" cy="425" r="9" fill="#4b4e59"/>
                        <use href="#ico-timer" x="741.500" y="416" width="16" height="16"/>
                        <polygon class="tag" points="754,261 764,248 822,248 822,273 764,273"/>
                        <text class="tag-price" x="769" y="265.500">1.0<tspan class="rise">80005</tspan></text>
                        <text class="purchase" x="720" y="22">PURCHASE</text>
                        <text class="purchase" x="720" y="33">TIME</text>
                        <text class="timer" x="725" y="30">00:48</text>
                        <text class="axis-y" x="800" y="94">1.085</text>
                        <text class="axis-x" x="101" y="446">7 Apr</text>
                        <text class="axis-x" x="257" y="446">11:30:00</text>
                        <text class="axis-x" x="412" y="446">17:30:00</text>
                        <text class="axis-x" x="567" y="446">23:30:00</text>
                        <text class="axis-x" x="722" y="446">8 Apr</text>
                    </svg>
                    <div class="panel-side">
                        <button class="square"><svg><use href="#ico-close"/></svg></button>
                        <button class="square"><svg><use href="#ico-expand"/></svg></button>
                        <div class="tools">
                            <button class="tool"><svg><use href="#ico-line"/></svg></button>
                            <button class="tool dim">5m</button>
                            <button class="tool"><svg><use href="#ico-pen"/></svg></button>
                            <button class="tool"><svg><use href="#ico-wave"/></svg><em>3</em></button>
                            <button class="tool">1d</button>
                        </div>
                    </div>
                    <div class="head">
                        <div class="asset">
                            <svg class="asset-flag" viewBox="0 0 26 27"><use href="#flag" width="26" height="27"/><text x="10.500" y="24.600" class="flag-text">OTC</text></svg>
                            <div>
                                <div class="asset-name">EUR/USD (OTC)<i class="caret small"></i></div>
                                <div class="asset-type">Binary</div>
                            </div>
                        </div>
                        <div class="pills">
                            <span class="pill"><svg><use href="#ico-info"/></svg>Info</span>
                            <span class="pill round"><svg><use href="#ico-bell"/></svg></span>
                            <span class="pill round"><svg><use href="#ico-star"/></svg></span>
                        </div>
                    </div>
                    <div class="trade">
                        <div class="stepper">
                            <div class="stepper-main">
                                <div class="stepper-label">Amount<svg><use href="#ico-help"/></svg></div>
                                <div class="stepper-value"><span>$</span>1</div>
                            </div>
                            <div class="stepper-btns"><b>+</b><b>−</b></div>
                        </div>
                        <div class="stepper">
                            <div class="stepper-main">
                                <div class="stepper-label">Expiration<svg><use href="#ico-help"/></svg></div>
                                <div class="stepper-value"><svg><use href="#ico-clock"/></svg>06:30</div>
                            </div>
                            <div class="stepper-btns"><b>+</b><b>−</b></div>
                        </div>
                        <div class="profit-label">Profit<svg><use href="#ico-help"/></svg></div>
                        <div class="profit-pct"><small>+</small>86<small>%</small></div>
                        <div class="profit-sum">+$0.86</div>
                        <button class="deal higher"><svg><use href="#ico-up"/></svg>HIGHER</button>
                        <button class="deal lower"><svg><use href="#ico-down"/></svg>LOWER</button>
                    </div>
                </section>

                <section class="panel">
                    <svg class="plot" viewBox="0 0 927 453">
                        <use href="#map" width="927" height="453"/>
                        <path class="grid" d="M0 145H800M0 327H732M143 0V433M339 0V433M536 0V433"/>
                        <g transform="translate(2 78) scale(.4847 .3333)">
                            <polygon class="band-light" points="0,200 30,120 50,48 330,48 390,62 465,65 480,105 535,128 550,195 925,195 1000,215 1030,300 1040,370 1210,370 1225,445 1250,445 1270,615 1370,615 1380,695 1490,710 1490,860 1345,860 1230,825 1150,825 1085,800 1050,740 985,712 940,705 930,640 900,500 890,455 780,450 710,388 410,388 400,375 385,325 300,305 240,325 190,340 175,385 140,405 140,437 0,437"/>
                            <polygon class="band-mid" points="0,240 30,120 50,48 250,48 280,62 335,65 350,100 395,125 425,215 475,240 550,195 790,195 870,215 890,290 905,370 1075,370 1095,445 1115,445 1135,615 1235,615 1250,680 1400,695 1490,695 1490,860 1345,860 1230,825 1150,825 1085,800 1050,740 985,712 940,705 930,640 900,500 890,455 780,450 710,388 410,388 400,375 385,325 300,305 240,270 205,210 190,290 105,325 40,335 0,400"/>
                            <polygon class="band-dark" points="25,130 50,48 100,48 130,62 175,65 195,125 245,125 265,215 285,235 385,245 420,270 470,240 540,205 590,205 615,195 640,195 660,215 720,215 745,290 755,380 845,375 920,370 945,405 965,445 985,615 1085,615 1115,670 1125,695 1190,695 1230,712 1280,712 1285,770 1375,775 1435,770 1480,775 1475,860 1345,860 1310,825 1240,825 1150,825 1085,800 1050,745 985,712 940,705 925,640 895,500 890,455 780,450 725,440 705,385 635,385 615,295 555,295 530,255 490,360 460,388 410,388 385,330 310,325 275,290 245,265 225,215 205,190 180,195 160,190 130,155 75,155 55,190 30,220 0,240"/>
                            <polyline class="price" points="20,170 30,130 50,50 68,145 80,90 95,150 115,80 125,65 135,100 145,140 160,175 175,130 190,150 195,125 210,190 235,240 255,255 270,285 285,260 300,300 315,320 330,250 345,320 370,280 385,330 400,370 420,300 435,355 455,290 480,235 500,250 520,240 545,210 560,260 575,235 590,205 605,260 625,340 640,360 660,225 680,260 695,320 715,425 735,410 760,420 780,445 785,380 800,420 830,410 850,375 868,380 885,415 900,495 910,450 920,510 940,700 955,675 970,640 985,640 1005,680 1030,620 1050,680 1055,740 1060,680 1085,800 1100,760 1125,700 1140,715 1150,820 1190,760 1205,735 1215,760 1230,725 1250,780 1285,780 1305,815 1330,795 1345,855 1365,795 1390,790 1410,860 1430,780 1460,785 1490,748"/>
                        </g>
                        <rect width="50" height="453" fill="url(#fade)"/>
                        <path class="expiry-ticks" d="M731 5V425"/>
                        <path class="expiry" d="M732 3V430"/>
                        <path class="grid" d="M724 327H736"/>
                        <circle cx="724" cy="327" r="20" fill="url(#glow)"/>
                        <circle cx="724" cy="327" r="2.500" fill="#12b93a"/>
                        <circle cx="730" cy="425" r="9.500" fill="#4b4e59"/>
                        <use href="#ico-timer" x="722" y="416" width="16" height="16"/>
                        <polygon class="tag" points="736,327 746,314 822,314 822,340 746,340"/>
                        <text class="tag-price" x="769" y="331.500">1.0<tspan class="rise">80005</tspan></text>
                        <g class="stopwatch" transform="translate(684 12)">
                            <circle cx="9" cy="11" r="6.500"/>
                            <path d="M9 11V6.500M6.500 1.500h5M9 1.500v3M14.500 4l1.500 1.500"/>
                        </g>
                        <text class="timer" x="707" y="29">00:48</text>
                        <text class="axis-y" x="800" y="149">1.082</text>
                        <text class="axis-x" x="143" y="446">05:00:00</text>
                        <text class="axis-x" x="339" y="446">05:30:00</text>
                        <text class="axis-x" x="536" y="446">06:00:00</text>
                        <text class="axis-x" x="732" y="446">06:30:00</text>
                    </svg>
                    <div class="panel-side">
                        <button class="square"><svg><use href="#ico-close"/></svg></button>
                        <button class="square"><svg><use href="#ico-expand"/></svg></button>
                        <div class="tools">
                            <button class="tool"><svg><use href="#ico-line"/></svg></button>
                            <button class="tool dim">15s</button>
                            <button class="tool"><svg><use href="#ico-pen"/></svg></button>
                            <button class="tool"><svg><use href="#ico-wave"/></svg><em>3</em></button>
                            <button class="tool">30m</button>
                        </div>
                    </div>
                    <div class="head">
                        <div class="asset">
                            <svg class="asset-flag" viewBox="0 0 26 27"><use href="#flag" width="26" height="27"/><text x="10.500" y="24.600" class="flag-text">OTC</text></svg>
                            <div>
                                <div class="asset-name">EUR/USD (OTC)<i class="caret small"></i></div>
                                <div class="asset-type">Digital</div>
                            </div>
                        </div>
                        <div class="pills">
                            <span class="pill"><svg><use href="#ico-info"/></svg>Info</span>
                            <span class="pill round"><svg><use href="#ico-bell"/></svg></span>
                            <span class="pill round"><svg><use href="#ico-star"/></svg></span>
                        </div>
                    </div>
                    <div class="trade">
                        <div class="stepper">
                            <div class="stepper-main">
                                <div class="stepper-label">Amount<svg><use href="#ico-help"/></svg></div>
                                <div class="stepper-value"><span>$</span>1</div>
                            </div>
                            <div class="stepper-btns"><b>+</b><b>−</b></div>
                        </div>
                        <div class="stepper">
                            <div class="stepper-main">
                                <div class="stepper-label">Expiration<svg><use href="#ico-help"/></svg></div>
                                <div class="stepper-value"><svg><use href="#ico-clock"/></svg>06:30</div>
                            </div>
                            <div class="stepper-btns"><b>+</b><b>−</b></div>
                        </div>
                        <div class="profit-label">Profit<svg><use href="#ico-help"/></svg></div>
                        <div class="profit-pct"><small>+</small>90<small>%</small></div>
                        <div class="profit-sum">+$0.90</div>
                        <button class="deal higher"><svg><use href="#ico-up"/></svg>HIGHER</button>
                        <button class="deal lower"><svg><use href="#ico-down"/></svg>LOWER</button>
                    </div>
                    <button class="hide-all">Hide All</button>
                </section>

            </div>
            <div class="portfolio-bar">
                <b>Total portfolio</b>
                <span>Show positions<svg viewBox="0 0 12 8"><path d="M1 7l5-5.500L11 7" fill="none" stroke="#999" stroke-width="1"/></svg></span>
            </div>
        </div>
    </div>

    <footer class="footer">
        <button class="support">
            <svg viewBox="0 0 16 16"><circle cx="7" cy="7" r="5" fill="none" stroke="#fff" stroke-width="1.400"/><path d="M10 11l3 3M3 13l3-1" stroke="#fff" stroke-width="1.400"/></svg>
            SUPPORT
        </button>
        <svg class="foot-help" viewBox="0 0 12 12"><circle cx="6" cy="6" r="6" fill="#666"/><path d="M4 4.600C4.100 3.500 5 3 6 3c1.200 0 2 .6 2 1.600C8 6 6.200 6 6.200 7.300M6.200 8.300v1.200" fill="none" stroke="#fff" stroke-width="1.300"/></svg>
        <span class="foot-mail">support@iqoption.com</span>
        <span class="foot-note">EVERY DAY, AROUND THE CLOCK</span>
        <div class="foot-right">
            <span class="foot-note">Powered by</span>
            <svg class="quad-mark" viewBox="0 0 14 14"><path d="M7 1l6 6-6 6-6-6zM3.500 4.500l6 6M5.300 2.700l6 6M2.700 9.300l6-6M4.500 11l6-6" fill="none" stroke="#444" stroke-width="1"/></svg>
            <b class="quad-name">quadcode</b>
            <svg class="foot-ico sound" viewBox="0 0 16 16"><path d="M1 5.500h3L8 2v12L4 10.500H1z" fill="#444"/><path d="M10 5.500c1 1.500 1 3.500 0 5M12 4c1.800 2.500 1.800 5.500 0 8" fill="none" stroke="#444" stroke-width="1.100"/></svg>
            <svg class="foot-ico gear" viewBox="0 0 16 16"><circle cx="8" cy="8" r="4.500" fill="none" stroke="#444" stroke-width="3"/><circle cx="8" cy="8" r="6.500" fill="none" stroke="#444" stroke-width="2.400" stroke-dasharray="2.500 2.600"/></svg>
            <span class="foot-note time-label">CURRENT TIME:</span>
            <span class="foot-mail">8 APRIL, 06:28:42</span>
            <span class="foot-note">(UTC+5:30)</span>
            <svg class="foot-ico full" viewBox="0 0 20 20"><path d="M1 1h5L1 6zM19 1v5l-5-5zM1 19v-5l5 5zM19 19h-5l5-5z" fill="#333"/><path d="M3 3l4 4M17 3l-4 4M3 17l4-4M17 17l-4-4" stroke="#333" stroke-width="1.500"/></svg>
        </div>
    </footer>
    <script src="chart.js"></script>
</body>

</html>
```

FILE: styles.css
```css
* {
    margin: 0;
    padding: 0;
    box-sizing: border-box;
}

body {
    display: flex;
    flex-direction: column;
    width: 1920px;
    height: 1080px;
    overflow: hidden;
    background: linear-gradient(#464b43 0, #464b43 60px, #000 60px);
    font-family: Roboto, "Liberation Sans", sans-serif;
    color: #333;
}

button {
    border: 0;
    font-family: inherit;
    background: none;
}

i,
em {
    font-style: normal;
}

.sprite {
    position: absolute;
}

.flag-text {
    font-size: 8.5px;
    font-weight: 700;
    fill: #fff;
    text-anchor: middle;
}

/* mac menu bar */
.menubar {
    display: flex;
    align-items: center;
    flex: none;
    height: 24px;
    padding-left: 17px;
    background: linear-gradient(90deg, #4d5145, #3b4440);
    color: #fff;
    font-size: 14px;
}

.apple {
    width: 20px;
    height: 20px;
}

.menu-app {
    margin-left: 17px;
    font-weight: 700;
}

.menu-icons {
    width: 320px;
    height: 24px;
    margin-left: auto;
}

.menu-clock {
    margin-left: 7px;
    font-family: Inter, Roboto, sans-serif;
    font-size: 12.5px;
    white-space: nowrap;
}

.menu-clock:last-child {
    margin-right: 19px;
}

/* window title */
.titlebar {
    display: flex;
    align-items: center;
    justify-content: center;
    position: relative;
    flex: none;
    height: 30px;
    padding-bottom: 2px;
    border-top: 1px solid #5b5b59;
    border-bottom: 1px solid #000;
    border-radius: 10px 10px 0 0;
    background: #383836;
    color: #c4c4c4;
    font-size: 14px;
    font-weight: 500;
}

.lights {
    display: flex;
    gap: 8px;
    position: absolute;
    left: 8px;
    top: 8px;
}

.lights i {
    width: 12px;
    height: 12px;
    border-radius: 50%;
}

.lights .red {
    background: #fc5d57;
}

.lights .yellow {
    background: #fdbc2e;
}

.lights .green {
    background: #27c63f;
}

/* top app bar */
.appbar {
    display: flex;
    align-items: center;
    flex: none;
    height: 59px;
    padding-left: 16px;
    border-bottom: 1px solid #dfe0e4;
    background: #fff;
}

.logo-mark {
    width: 26px;
    height: 26px;
    flex: none;
}

.logo-text {
    width: 88px;
    margin-left: 8px;
    font-family: Lato, Roboto, sans-serif;
    font-size: 21.5px;
    letter-spacing: -.8px;
    color: #4a4a4c;
}

.layout-btn {
    display: grid;
    grid-template-columns: 12px 12px;
    gap: 2px;
    align-content: center;
    justify-content: center;
    align-self: flex-start;
    width: 38px;
    height: 37px;
    margin-top: 9px;
    border: 1px solid #ccc;
    border-radius: 2px;
}

.layout-btn i {
    height: 12px;
    background: #47494d;
    border-radius: 1px;
}

.tabs {
    display: flex;
    gap: 9.5px;
    align-self: flex-start;
    margin: 9px 0 0 11px;
}

.tab {
    display: flex;
    align-items: center;
    gap: 8px;
    position: relative;
    width: 107px;
    height: 39px;
    padding: 4px 0 0 8px;
    border-bottom: 3px solid #4b4f5a;
    border-radius: 2px 2px 0 0;
    background: #efefef;
}

.tab.active {
    border-bottom-color: #ee6a05;
}

.tab-x {
    position: absolute;
    left: 3px;
    top: 3px;
    width: 8px;
    height: 8px;
}

.tab-flag {
    width: 20px;
    height: 21px;
    flex: none;
}

.tab b {
    display: block;
    font-size: 10.5px;
    font-weight: 500;
    line-height: 14px;
    letter-spacing: -.3px;
    color: #2c2c2c;
    white-space: nowrap;
}

.tab span {
    display: block;
    font-size: 9px;
    line-height: 12px;
    color: #666;
}

.plus-btn {
    align-self: flex-start;
    width: 39px;
    height: 37px;
    margin: 9px 0 0 19px;
    border: 1px solid #ccc;
    border-radius: 2px;
    font-size: 26px;
    font-weight: 500;
    line-height: 32px;
    color: #444;
}

.account {
    display: flex;
    align-items: center;
    margin-left: auto;
    padding-right: 9px;
}

.avatar {
    width: 38px;
    height: 38px;
    margin-top: -4px;
}

.caret {
    display: inline-block;
    width: 0;
    height: 0;
    margin-left: 6px;
    border: 4px solid transparent;
    border-top: 5px solid #4d4d4d;
    border-bottom: 0;
}

.caret.orange {
    margin-left: 9px;
    border-top-color: #e9650e;
}

.caret.small {
    margin-left: 3px;
    vertical-align: 2px;
}

.balance {
    margin-left: 20px;
    font-size: 11px;
    letter-spacing: 1.500px;
    white-space: nowrap;
    color: #e9650e;
}

.balance b {
    font-size: 18px;
    font-weight: 500;
    letter-spacing: 0;
}

.deposit {
    display: flex;
    align-items: center;
    gap: 9px;
    width: 119px;
    height: 36px;
    margin-left: 11px;
    padding-left: 18px;
    border: 1px solid #0c9a3a;
    border-radius: 2px;
    font-size: 16.5px;
    color: #1aa848;
}

.deposit svg {
    width: 22px;
    height: 22px;
}

.deposit-sign {
    font-size: 11px;
    font-weight: 700;
    fill: #0c9a3a;
    text-anchor: middle;
}

/* sidebar and panels */
.workspace {
    display: flex;
    flex: none;
    height: 937px;
}

.sidebar {
    display: flex;
    flex-direction: column;
    gap: 14px;
    flex: none;
    width: 61px;
    padding-top: 5px;
    border-right: 1px solid #dcdde0;
    background: #fdfdfd;
}

.side-item {
    display: flex;
    flex-direction: column;
    align-items: center;
    position: relative;
    font-size: 7.500px;
    line-height: 10.5px;
    text-align: center;
    color: #a3a3a3;
}

.side-item svg {
    width: 24px;
    height: 24px;
    margin-bottom: 5px;
}

.side-item em {
    position: absolute;
    left: 36px;
    top: -3px;
    width: 12px;
    height: 12px;
    border-radius: 50%;
    background: #ee6a05;
    font-size: 8px;
    line-height: 12px;
    color: #fff;
}

.content {
    display: flex;
    flex-direction: column;
    flex: 1;
}

.panels {
    display: grid;
    grid-template-columns: 927px 927px;
    grid-template-rows: 453px 452px;
    gap: 6px 5px;
    height: 913px;
    background: #f0f1f3;
}

.panel {
    display: flex;
    position: relative;
    padding: 5px 8px 0 7px;
    overflow: hidden;
    background: #fdfdfd;
}

.plot {
    position: absolute;
    left: 0;
    top: 0;
    width: 927px;
    height: 453px;
    font-family: Roboto, sans-serif;
}

.grid {
    fill: none;
    stroke: #dcdcdc;
    stroke-width: 1.5;
}

.band-light,
.band-mid,
.band-dark {
    opacity: .93;
}

.band-light {
    fill: #9de1ff;
}

.band-mid {
    fill: #79c6e9;
}

.band-dark {
    fill: #4aa4d5;
}

.price {
    fill: none;
    stroke: #3c73c9;
    stroke-width: 2.400;
    stroke-linejoin: round;
    vector-effect: non-scaling-stroke;
}

.expiry {
    fill: none;
    stroke: #d9503f;
    stroke-width: 2;
}

.expiry-ticks {
    fill: none;
    stroke: #222;
    stroke-width: 1;
    stroke-dasharray: 1 2;
}

.tag {
    fill: #333;
    stroke: #555;
}

.tag-price {
    font-size: 12px;
    fill: #b8b8b8;
}

.tag-price .fall {
    font-weight: 500;
    fill: #d9503f;
}

.tag-price .rise {
    fill: #1fae4b;
}

.purchase {
    font-size: 7.5px;
    fill: #555;
    text-anchor: end;
}

.timer {
    font-size: 19px;
    fill: #555;
}

.stopwatch {
    fill: none;
    stroke: #444;
    stroke-width: 1.600;
}

.bell-box {
    fill: #9a9a9a;
}

.price-box,
.date-box {
    fill: #5c5f6b;
}

.price-text,
.date-text {
    font-size: 10.5px;
    fill: #fff;
    text-anchor: middle;
}

.axis-y {
    font-size: 11px;
    fill: #b5b5b5;
}

.axis-x {
    font-size: 11px;
    fill: #9c9c9c;
    text-anchor: middle;
}

.panel-side {
    display: flex;
    flex-direction: column;
    position: relative;
    flex: none;
    width: 26px;
    padding: 1px 0 18px;
}

.square {
    width: 26px;
    height: 26px;
    margin-bottom: 8px;
    border-radius: 2px;
    background: #f0f0f1;
}

.square svg {
    width: 16px;
    height: 16px;
    vertical-align: middle;
}

.tools {
    display: flex;
    flex-direction: column;
    gap: 2px;
    margin-top: auto;
}

.tool {
    position: relative;
    width: 26px;
    height: 26px;
    border: 1px solid #c6cdd3;
    border-radius: 2px;
    background: rgba(255, 255, 255, .45);
    font-size: 10.5px;
    font-weight: 700;
    color: #2c2c2c;
}

.tool svg {
    width: 20px;
    height: 20px;
    vertical-align: middle;
}

.tool.dim {
    font-weight: 500;
    color: #b0b0b0;
}

.tool em {
    position: absolute;
    right: -7px;
    top: -7px;
    width: 13px;
    height: 13px;
    border-radius: 50%;
    background: #5c5f6a;
    font-size: 8px;
    font-weight: 400;
    line-height: 13px;
    color: #fff;
}

.head {
    position: relative;
    flex: 1;
    margin-left: 11px;
    padding-top: 8px;
}

.asset {
    display: flex;
    gap: 8px;
    height: 27px;
}

.asset-flag {
    width: 26px;
    height: 27px;
    flex: none;
}

.asset-name {
    margin-top: -3px;
    font-size: 12px;
    font-weight: 500;
    line-height: 16px;
    color: #222;
}

.asset-type {
    margin-top: 3px;
    font-size: 10px;
    line-height: 14px;
    color: #666;
}

.pills {
    display: flex;
    gap: 5px;
    margin-top: 13px;
}

.pill {
    display: flex;
    align-items: center;
    gap: 4px;
    width: 51px;
    height: 26px;
    padding-left: 5px;
    border-radius: 13px;
    background: #ececee;
    font-size: 10.5px;
    font-weight: 500;
    color: #333;
}

.pill svg {
    width: 14px;
    height: 14px;
}

.pill.round {
    justify-content: center;
    width: 26px;
    padding: 0;
}

.pill.round + .pill.round {
    margin-left: -1px;
}

.trade {
    display: flex;
    flex-direction: column;
    position: relative;
    flex: none;
    width: 88px;
}

.stepper {
    display: flex;
    height: 40px;
    margin-bottom: 6px;
    border-radius: 3px;
    background: rgba(236, 237, 239, .88);
}

.stepper-main {
    flex: 1;
    padding: 4px 0 0 8px;
}

.stepper-label {
    display: flex;
    align-items: center;
    justify-content: space-between;
    padding-right: 3px;
    font-size: 10.5px;
    line-height: 14px;
    color: #8a8a8a;
}

.stepper-label svg {
    width: 8px;
    height: 8px;
}

.stepper-value {
    display: flex;
    align-items: center;
    gap: 3px;
    margin-top: 3px;
    font-size: 12px;
    line-height: 14px;
    color: #333;
}

.stepper-value span {
    margin-right: 4px;
    color: #777;
}

.stepper-value svg {
    width: 10px;
    height: 10px;
}

.stepper-btns {
    display: flex;
    flex-direction: column;
    flex: none;
    width: 15px;
}

.stepper-btns b {
    height: 20px;
    font-size: 12px;
    font-weight: 700;
    line-height: 20px;
    text-align: center;
    color: #333;
}

.stepper-btns b:last-child {
    border-top: 1px solid #fff;
    border-left: 1px solid #fff;
}

.profit-label {
    margin-top: 5px;
    font-size: 10.5px;
    line-height: 14px;
    text-align: center;
    color: #333;
}

.profit-label svg {
    width: 8px;
    height: 8px;
    margin-left: 3px;
    vertical-align: 2px;
}

.profit-pct {
    height: 40px;
    margin-top: 4px;
    font-size: 34px;
    font-weight: 300;
    line-height: 40px;
    text-align: center;
    color: #1eaa4f;
}

.profit-pct small {
    font-size: 20px;
}

.profit-sum {
    margin-top: 6px;
    font-size: 14px;
    font-weight: 700;
    line-height: 18px;
    text-align: center;
    color: #1eaa4f;
}

.deal {
    display: flex;
    flex-direction: column;
    align-items: center;
    justify-content: center;
    flex: none;
    height: 88px;
    padding-top: 5px;
    border-radius: 2px;
    font-size: 12px;
    font-weight: 500;
    color: #fff;
}

.deal svg {
    width: 24px;
    height: 18px;
    margin-bottom: 7px;
}

.higher {
    margin-top: 11px;
    background: #009a32;
}

.lower {
    margin-top: 6px;
    background: #d94e3f;
}

.panel:nth-child(n+3) .higher {
    margin-top: 10px;
}

.hide-all {
    position: absolute;
    left: 735px;
    top: 409px;
    width: 85px;
    height: 26px;
    border-radius: 13px;
    background: #eeeff1;
    font-size: 11px;
    color: #333;
}

.portfolio-bar {
    display: flex;
    align-items: center;
    justify-content: space-between;
    height: 24px;
    padding: 0 10px 0 20px;
    background: #e0e1e3;
    font-size: 10px;
    color: #555;
}

.portfolio-bar b {
    font-size: 10.5px;
    font-weight: 500;
    letter-spacing: -.3px;
    color: #111;
}

.portfolio-bar svg {
    width: 11px;
    height: 7px;
    margin-left: 7px;
}

.footer {
    display: flex;
    align-items: center;
    flex: none;
    height: 30px;
    padding: 0 4px;
    border-radius: 0 0 10px 10px;
    background: #f4f4f4;
    font-size: 10px;
}

.support {
    display: flex;
    align-items: center;
    gap: 5px;
    width: 69px;
    height: 25px;
    padding-left: 6px;
    border-radius: 2px;
    background: #d94f3f;
    font-size: 8px;
    color: #fff;
}

.support svg {
    width: 15px;
    height: 15px;
}

.foot-help {
    width: 12px;
    height: 12px;
    margin: 0 3px 0 7px;
}

.foot-mail {
    font-size: 10.2px;
    letter-spacing: -.1px;
    color: #333;
}

.foot-note {
    margin-left: 8px;
    color: #9a9a9a;
}

.foot-right {
    display: flex;
    align-items: center;
    margin-left: auto;
}

.foot-right .foot-mail {
    margin-left: 5px;
    color: #222;
}

.foot-right .foot-note + .foot-note {
    margin-left: 5px;
}

.quad-mark {
    width: 13px;
    height: 13px;
    margin-left: 5px;
}

.quad-name {
    margin-left: 3px;
    font-family: "DejaVu Sans", sans-serif;
    font-size: 10.2px;
    font-weight: 700;
    letter-spacing: .1px;
    color: #444;
}

.foot-ico {
    flex: none;
}

.sound {
    width: 15px;
    height: 15px;
    margin-left: 24px;
}

.gear {
    width: 14px;
    height: 14px;
    margin-left: 20px;
}

.time-label {
    margin-left: 18px;
}

.full {
    width: 19px;
    height: 19px;
    margin-left: 18px;
}
```

FILE: chart.js
```js
// turn the traced price points into a curved line with some small wiggle
var lines = document.querySelectorAll('.price');

for (var n = 0; n < lines.length; n++) {
    var raw = lines[n].getAttribute('points').trim().split(' ');
    var pts = [];
    for (var i = 0; i < raw.length; i++) {
        var xy = raw[i].split(',');
        var x = Number(xy[0]);
        var y = Number(xy[1]);
        if (i > 0) {
            var prev = pts[pts.length - 1];
            pts.push([(prev[0] + x) / 2, (prev[1] + y) / 2 + Math.sin(i * 2.7) * 9]);
        }
        pts.push([x, y]);
    }

    var d = 'M' + pts[0][0] + ' ' + pts[0][1];
    for (var j = 0; j < pts.length - 1; j++) {
        var p0 = pts[Math.max(j - 1, 0)];
        var p1 = pts[j];
        var p2 = pts[j + 1];
        var p3 = pts[Math.min(j + 2, pts.length - 1)];
        d += 'C' + (p1[0] + (p2[0] - p0[0]) / 6) + ' ' + (p1[1] + (p2[1] - p0[1]) / 6) + ' ' +
            (p2[0] - (p3[0] - p1[0]) / 6) + ' ' + (p2[1] - (p3[1] - p1[1]) / 6) + ' ' +
            p2[0] + ' ' + p2[1];
    }

    var path = document.createElementNS('http://www.w3.org/2000/svg', 'path');
    path.setAttribute('class', 'price');
    path.setAttribute('d', d);
    lines[n].parentNode.replaceChild(path, lines[n]);
}
```
